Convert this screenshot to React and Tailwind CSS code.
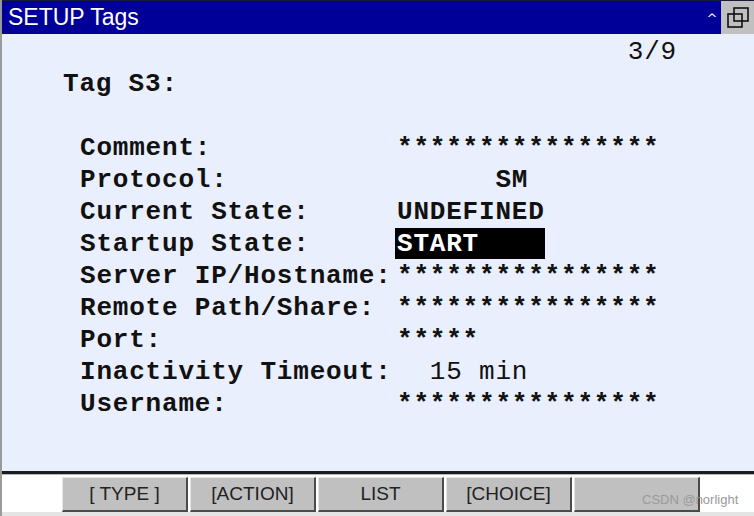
import React from 'react';

const fields = [
  { label: 'Comment:', value: '****************' },
  { label: 'Protocol:', value: '      SM' },
  { label: 'Current State:', value: 'UNDEFINED' },
  { label: 'Startup State:', value: 'START', selected: true },
  { label: 'Server IP/Hostname:', value: '****************' },
  { label: 'Remote Path/Share:', value: '****************' },
  { label: 'Port:', value: '*****' },
  { label: 'Inactivity Timeout:', value: '  15 min' },
  { label: 'Username:', value: '****************' },
];

const keys = ['[ TYPE ]', '[ACTION]', 'LIST', '[CHOICE]', ''];

const RestoreIcon = () => (
  <svg width="26" height="24" viewBox="0 0 26 24" fill="none" stroke="#111" strokeWidth="1.6">
    <rect x="9" y="2" width="14" height="13" />
    <rect x="3" y="8" width="14" height="13" />
  </svg>
);

const App = () => {
  return (
    <div className="w-[754px] h-[516px] flex flex-col border-l-2 border-[#9a9a9a] bg-[#e9effc] overflow-hidden">
      {/* Title bar */}
      <div className="h-[34px] flex items-stretch bg-[#000099] border-t border-[#1a1a3a]">
        <div className="flex-1 flex items-center pl-[6px] text-white text-[23px] font-['Liberation_Sans',Arial,sans-serif]">
          SETUP Tags
        </div>
        <div className="w-[18px] flex items-center justify-center text-white text-[13px] font-['DejaVu_Sans',sans-serif] pt-[2px]">
          ^
        </div>
        <div className="w-[33px] bg-[#c0c0c0] flex items-center justify-center">
          <RestoreIcon />
        </div>
      </div>

      {/* Screen content */}
      <div className="flex-1 pt-[2px] font-['Liberation_Mono','Courier_New',monospace] font-bold text-[26px] tracking-[0.8px] text-[#111] leading-[32px] whitespace-pre">
        <div className="h-[32px] flex justify-end pr-[77px] font-normal">3/9</div>
        <div className="h-[32px] pl-[61px]">Tag S3:</div>
        <div className="h-[32px]" />
        {fields.map(({ label, value, selected }) => (
          <div key={label} className="h-[32px] flex pl-[78px]">
            <div className="w-[317px]">{label}</div>
            {selected ? (
              <div className="-ml-[2px] pl-[2px] w-[150px] h-[31px] bg-black text-white">{value}</div>
            ) : (
              <div className={label === 'Inactivity Timeout:' ? 'font-normal' : ''}>{value}</div>
            )}
          </div>
        ))}
      </div>

      {/* Function keys */}
      <div className="h-[45px] border-t-[3px] border-[#1c1c1c] bg-white relative">
        <div className="h-[1px] bg-[#b8b8b8]" />
        <div className="flex gap-[2px] pl-[60px] pt-[2px] h-[37px]">
          {keys.map((k, i) => (
            <div
              key={i}
              className="w-[126px] h-[35px] bg-[#c0c0c0] border-t border-l border-[#e6e6e6] border-r-2 border-b-2 border-r-[#4a4a4a] border-b-[#4a4a4a] flex items-center justify-center text-[19px] text-[#222] font-['Liberation_Sans',Arial,sans-serif]"
            >
              {k}
            </div>
          ))}
        </div>
        <div className="h-[4px] bg-[#e4e4e4]" />
        <span className="absolute left-[640px] top-[16px] text-[13px] text-[#9a9a9a] font-['Liberation_Sans',Arial,sans-serif]">
          CSDN @norlight
        </span>
      </div>
    </div>
  );
};

export default App;
